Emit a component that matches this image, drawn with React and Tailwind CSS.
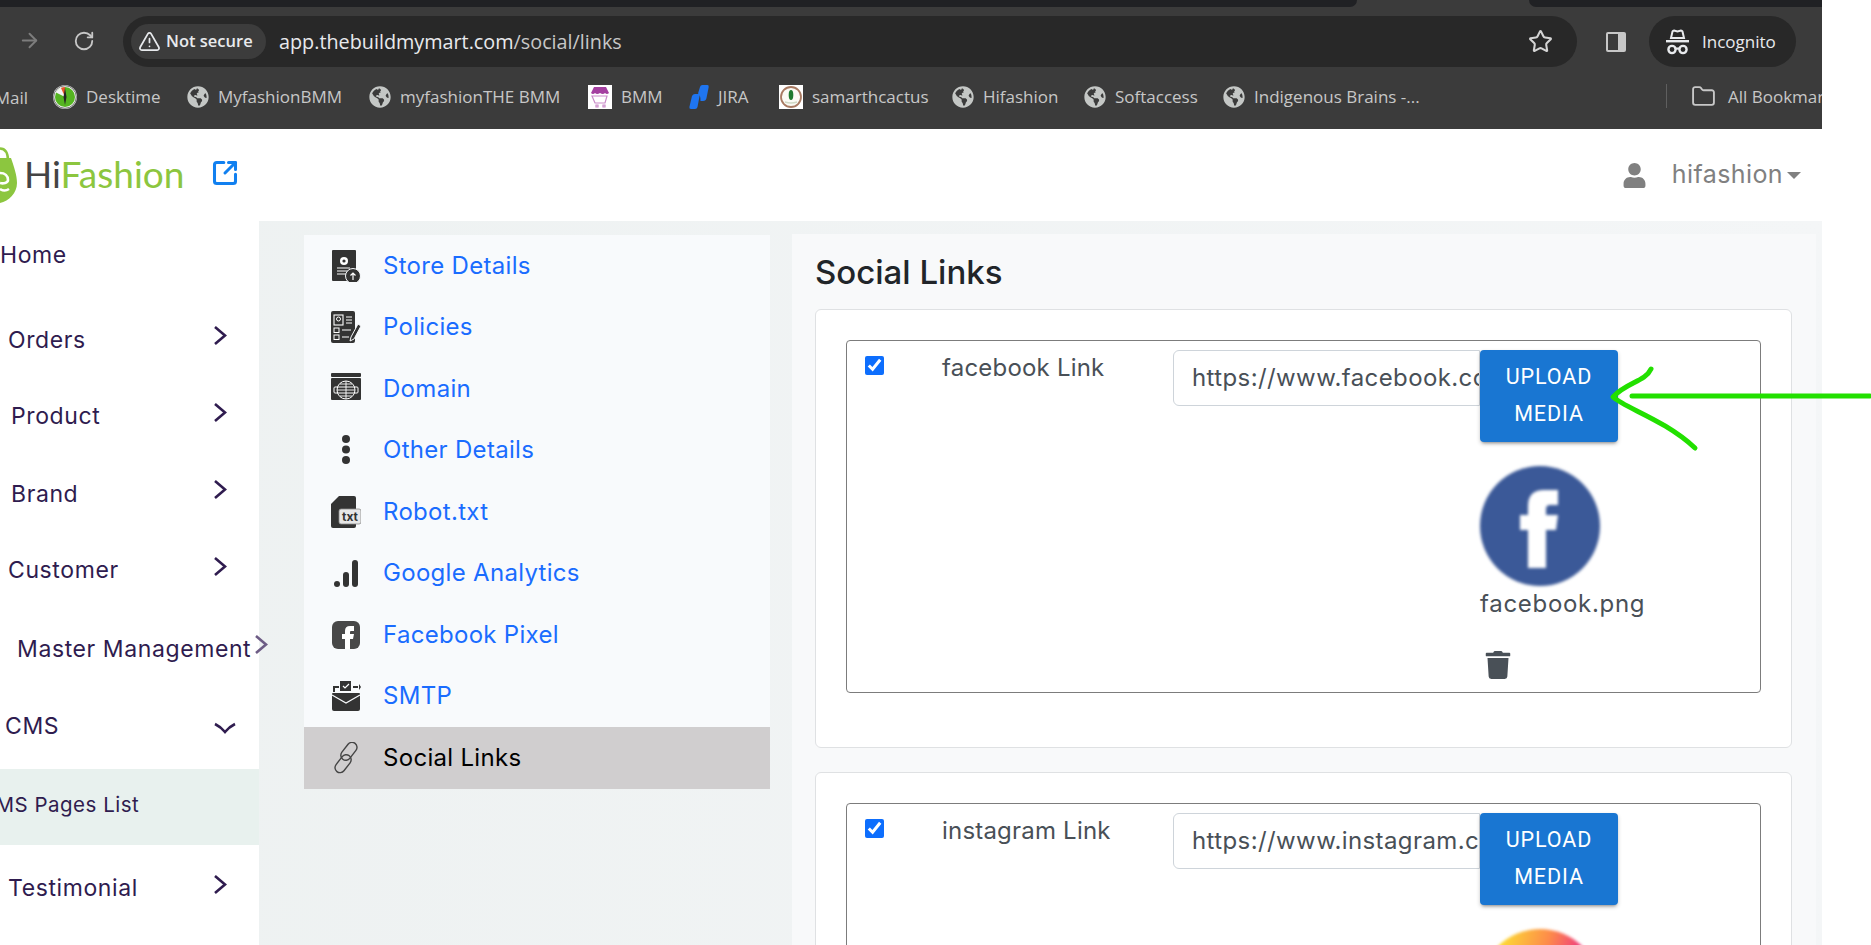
import React from "react";
import { ArrowRight, RotateCw, TriangleAlert, Star, Folder, SquareArrowOutUpRight } from "lucide-react";
import { FaGlobeAmericas, FaUser, FaTrash } from "react-icons/fa";

const Globe = () => <FaGlobeAmericas size={22} className="text-[#c4c7c5] shrink-0" />;

const Desktime = () => (
  <svg width="24" height="24" viewBox="0 0 24 24" className="shrink-0">
    <circle cx="12" cy="12" r="12" fill="#f4f4f4" />
    <circle cx="12" cy="12" r="10" fill="#55b521" />
    <path d="M12 12V2A10 10 0 0 0 3 7.5z" fill="#f4f4f4" />
    <path d="M12 12V2A10 10 0 0 0 8 3z" fill="#e8562a" />
    <path d="M12 3l1.5 9-1.5 8-1.5-8z" fill="#222" />
    <circle cx="12" cy="12" r="11.3" fill="none" stroke="#1d1d1d" strokeWidth="0.6" />
  </svg>
);
const Bmm = () => (
  <svg width="24" height="24" viewBox="0 0 24 24" className="shrink-0">
    <rect width="24" height="24" fill="#fff" />
    <path d="M6 2h12l3 6q-2 2-4 0-2 2-5 0-3 2-5 0-2 2-4 0z" fill="#a43fa0" />
    <path d="M4 11h15l-2 7H7zM8 20h2v2H8zM15 20h2v2h-2z" fill="none" stroke="#c98ac8" strokeWidth="1.2" />
  </svg>
);
const Jira = () => (
  <svg width="20" height="26" viewBox="0 0 20 26" className="shrink-0">
    <path d="M3 12Q4 10 6 10H10Q11 10 10.6 12L8.5 23Q8 25 6 25H2Q0 25 0.4 23ZM11 3Q11.4 1 13.5 1H18.5Q20 1 19.7 3L17.5 14Q17 17 14 17L11.5 17Q11.5 10 9 9.5Z" fill="#1f75f0" />
  </svg>
);
const Samarth = () => (
  <svg width="24" height="24" viewBox="0 0 24 24" className="shrink-0">
    <rect width="24" height="24" fill="#fff" />
    <circle cx="12" cy="12" r="10" fill="#fbfaf4" stroke="#a87a62" strokeWidth="1.8" />
    <ellipse cx="12" cy="10" rx="2.3" ry="5" fill="#1f7a2f" />
    <path d="M6 17q6 2 12 0" fill="none" stroke="#cfd8c4" strokeWidth="1.5" />
  </svg>
);

const Incognito = () => (
  <svg width="23" height="26" viewBox="0 0 23 26" fill="#e8eaed" className="shrink-0">
    <path d="M6.5 2.5Q7 1.5 8 1.5L11.5 2.5 15 1.5Q16 1.5 16.5 2.5L18 9H5Z" fill="none" stroke="#e8eaed" strokeWidth="2" />
    <rect x="0" y="11" width="23" height="2.4" />
    <circle cx="6" cy="20.5" r="3.6" fill="none" stroke="#e8eaed" strokeWidth="2.4" />
    <circle cx="17" cy="20.5" r="3.6" fill="none" stroke="#e8eaed" strokeWidth="2.4" />
    <rect x="9.5" y="18.5" width="4" height="2.2" />
  </svg>
);

const SidePanel = () => (
  <svg width="22" height="22" viewBox="0 0 22 22" className="shrink-0">
    <rect x="1" y="1" width="20" height="20" rx="2" fill="#c7c7c7" />
    <rect x="3" y="3" width="10" height="16" fill="#3b3b3b" />
  </svg>
);

const Logo = () => (
  <svg width="17" height="57" viewBox="0 0 17 57" className="shrink-0">
    <path d="M0 1.5C5 1.5 8 5 8 14" fill="none" stroke="#8cc63f" strokeWidth="2.6" />
    <path d="M0 11H11C14 20 17 28 17 36 17 46 9 54 0 56Z" fill="#8cc63f" />
    <path d="M0 26C5 26 8 29 8 33 8 36 3 37 0 36M0 42C3 44 6 44 9 42" fill="none" stroke="#fff" strokeWidth="2.6" />
  </svg>
);

const Right = ({ c = "#2f1c4f", cls = "" }) => (
  <svg width="14" height="21" viewBox="0 0 14 21" className={"shrink-0 " + cls}>
    <polyline points="2,2 12,10.5 2,19" fill="none" stroke={c} strokeWidth="2.6" />
  </svg>
);
const Down = () => (
  <svg width="22" height="13" viewBox="0 0 22 13" className="shrink-0 mt-[11px]">
    <path d="M1 2Q7 5 11 10Q15 5 21 2" fill="none" stroke="#2f1c4f" strokeWidth="2.6" />
  </svg>
);

const Ic = ({ children }) => (
  <svg width="30" height="32" viewBox="0 0 30 32" fill="#333" className="shrink-0">{children}</svg>
);
const icons = {
  store: (
    <Ic>
      <rect x="1" y="0" width="24" height="31" rx="1" />
      <circle cx="13" cy="11" r="4" fill="#fff" />
      <circle cx="13" cy="11" r="1.6" />
      <path d="M6 18h13M6 21h11M6 24h9" stroke="#fff" strokeWidth="1.2" />
      <circle cx="22" cy="26" r="7.5" stroke="#f8fafc" strokeWidth="1" />
      <path d="M22 30v-7M19.5 25.5 22 23l2.5 2.5" stroke="#fff" strokeWidth="1.2" fill="none" />
    </Ic>
  ),
  policies: (
    <Ic>
      <rect x="0" y="0" width="24" height="32" rx="2" />
      <rect x="3" y="4" width="9" height="10" fill="none" stroke="#fff" strokeWidth="1.1" />
      <circle cx="7.5" cy="8" r="2" fill="none" stroke="#fff" />
      <path d="M15 6h6M15 9h6M15 12h6" stroke="#fff" />
      <rect x="3" y="17" width="5" height="4.5" fill="none" stroke="#fff" />
      <rect x="3" y="24" width="5" height="4.5" fill="none" stroke="#fff" />
      <path d="M11 19h9M11 26h7" stroke="#fff" strokeWidth="1.2" />
      <path d="M20 26l7-13 3 2-7 13-4 2z" stroke="#f8fafc" strokeWidth="1" />
    </Ic>
  ),
  domain: (
    <Ic>
      <rect x="0" y="0" width="30" height="4" rx="1" />
      <rect x="0" y="5" width="30" height="22" rx="1" />
      <circle cx="15" cy="17" r="9" fill="none" stroke="#fff" strokeWidth="1" />
      <path d="M6 17h18M15 8v18M9 11h12M9 23h12" stroke="#fff" strokeWidth="0.9" />
      <rect x="3" y="14" width="24" height="6" rx="1" fill="none" stroke="#fff" strokeWidth="1" />
    </Ic>
  ),
  other: (
    <Ic>
      <circle cx="15" cy="5" r="4" />
      <circle cx="15" cy="15.5" r="4" />
      <circle cx="15" cy="26" r="4" />
    </Ic>
  ),
  robot: (
    <Ic>
      <path d="M8 0h15a2 2 0 0 1 2 2v28a2 2 0 0 1-2 2H2a2 2 0 0 1-2-2V8z" />
      <rect x="8" y="13" width="22" height="15" rx="2" fill="#e7e7e7" stroke="#8a8a8a" strokeWidth="0.8" />
      <text x="19" y="25" textAnchor="middle" fontSize="12" fontWeight="700" fontFamily="Inter, sans-serif" fill="#333">txt</text>
    </Ic>
  ),
  google: (
    <Ic>
      <circle cx="6" cy="27" r="3" />
      <rect x="12" y="15" width="6" height="15" rx="3" />
      <rect x="21" y="3" width="6" height="27" rx="3" />
    </Ic>
  ),
  fb: (
    <Ic>
      <rect x="1" y="2" width="28" height="28" rx="6" fill="#484848" />
      <path d="M14 30V20h-3v-5h3v-3q0-5 5-5h4v5h-3q-1 0-1 1v2h4l-1 5h-3v10z" fill="#fff" />
    </Ic>
  ),
  smtp: (
    <Ic>
      <path d="M3 12V7h5M22 7h5" fill="none" stroke="#333" strokeWidth="2" />
      <rect x="9" y="1" width="11" height="10" />
      <path d="M12 6l2 2 4-4" fill="none" stroke="#fff" strokeWidth="1.2" />
      <path d="M28 4l2 3-2 3z" />
      <path d="M2 13h26a1 1 0 0 1 1 1v15a2 2 0 0 1-2 2H3a2 2 0 0 1-2-2V14a1 1 0 0 1 1-1z" />
      <path d="M1 15l14 8 14-8" fill="none" stroke="#f8fafc" strokeWidth="1.2" />
    </Ic>
  ),
  link: (
    <Ic>
      <g fill="none" stroke="#444" strokeWidth="1.4">
        <rect x="12.5" y="-0.5" width="10" height="20" rx="5" transform="rotate(38 18 10)" />
        <rect x="7.5" y="11.5" width="10" height="20" rx="5" transform="rotate(38 12 21)" />
      </g>
    </Ic>
  ),
};

const Bookmark = ({ icon, width, children }) => (
  <div className="flex items-center gap-[9px] shrink-0">
    {icon}
    <span className={width + " whitespace-nowrap"}>{children}</span>
  </div>
);

const SideRow = ({ cls, text, icon }) => (
  <div className={"flex " + cls}>
    <span className="whitespace-nowrap">{text}</span>
    {icon}
  </div>
);

const NavItem = ({ icon, text, active }) => (
  <div className={"h-[61.5px] pl-[27px] flex items-center gap-[22px] " + (active ? "bg-[#d0cecf] text-black" : "text-[#1a6cff]")}>
    <div className="w-[30px] flex justify-center">{icons[icon]}</div>
    <span className="text-[24px] tracking-[0.3px]">{text}</span>
  </div>
);

const LinkCard = ({ name, url, img }) => (
  <div className="bg-white border border-[#dfe1e3] rounded-md pt-[30px] pl-[30px] pr-[30px] pb-[54px] mb-[24px]">
    <div className="border border-[#7c7c7c] rounded-[4px] h-[353px] pt-[9px] pl-[18px] flex items-start">
      <input type="checkbox" checked readOnly className="w-[19px] h-[19px] mt-[6px] accent-[#0d6efd]" />
      <label className="ml-[58px] w-[231px] text-[24px] tracking-[0.2px] text-[#495057] whitespace-nowrap">{name}</label>
      <input
        readOnly
        value={url}
        className="w-[307px] h-[56px] border border-[#ced4da] rounded-l-md pl-[18px] pb-[2px] text-[24px] tracking-[0.4px] text-[#495057] bg-white outline-none"
      />
      <div className="flex flex-col">
        <button className="w-[138px] h-[92px] pb-[2px] bg-[#1976d2] rounded-[4px] text-white text-[21.5px] font-normal font-['Roboto',sans-serif] leading-[37px] tracking-[0.9px] uppercase shadow-[0_3px_3px_-2px_rgba(0,0,0,0.3),0_2px_4px_rgba(0,0,0,0.2)]">
          Upload<br />Media
        </button>
        {img}
      </div>
    </div>
  </div>
);

const FbImg = (
  <>
    <svg width="120" height="120" viewBox="0 0 120 120" className="mt-[24px] blur-[1.5px]">
      <circle cx="60" cy="60" r="60" fill="#3b5998" />
      <path d="M48 102V64H40V49H48V40Q48 24 64 24H78V39H70Q66 39 66 43V49H78L76 64H66V102Z" fill="#fff" />
    </svg>
    <div className="text-[24px] leading-[36px] tracking-[0.7px] text-[#495057]">facebook.png</div>
    <FaTrash size={28} className="text-[#495057] mt-[29px] ml-[4px]" />
  </>
);
const IgImg = (
  <svg width="120" height="120" viewBox="0 0 120 120" className="mt-[24px] blur-[1.5px]">
    <defs>
      <linearGradient id="ig" x1="0" y1="0" x2="1" y2="0.3">
        <stop offset="0.2" stopColor="#fdd835" />
        <stop offset="0.55" stopColor="#fd8a4a" />
        <stop offset="0.8" stopColor="#f0407c" />
      </linearGradient>
    </defs>
    <circle cx="60" cy="60" r="60" fill="url(#ig)" />
  </svg>
);

export default function App() {
  return (
    <div className="relative w-[1871px] h-[945px] overflow-hidden bg-white font-['Inter',sans-serif]">
      {/* browser chrome */}
      <div className="w-[1822px] h-[129px] bg-[#3b3b3b] flex flex-col text-[#c7c7c7] font-['Open_Sans',sans-serif]">
        <div className="h-[7px] flex">
          <div className="w-[1357px] bg-[#202124] rounded-br-[10px]" />
          <div className="w-[172px]" />
          <div className="flex-1 bg-[#202124] rounded-bl-[10px]" />
        </div>
        <div className="h-[60px] pt-[9px] flex items-start">
          <ArrowRight size={23} strokeWidth={2} className="ml-[18px] mt-[13px] text-[#7d7d7d] shrink-0" />
          <RotateCw size={22} strokeWidth={2} className="ml-[32px] mt-[14px] text-[#c7c7c7] shrink-0" />
          <div className="ml-[28px] w-[1454px] h-[51px] rounded-full bg-[#282828] flex items-center pl-[8px] pr-[22px]">
            <div className="w-[135px] h-[35px] rounded-full bg-[#3c3c3c] flex items-center pl-[7px] gap-[5px] shrink-0">
              <TriangleAlert size={23} strokeWidth={1.8} className="text-[#e8eaed] shrink-0" />
              <span className="text-[16.5px] font-semibold text-[#e8eaed] whitespace-nowrap">Not secure</span>
            </div>
            <span className="ml-[13px] text-[19.8px] text-[#e8eaed] whitespace-nowrap">
              app.thebuildmymart.com<span className="text-[#c7c7c7]">/social/links</span>
            </span>
            <Star size={25} strokeWidth={2} className="ml-auto mr-[2px] text-[#d4d4d4]" />
          </div>
          <div className="ml-[28px] mt-[15px]"><SidePanel /></div>
          <div className="ml-[22px] w-[147px] h-[51px] rounded-full bg-[#282828] flex items-center pl-[17px] gap-[13px] shrink-0">
            <Incognito />
            <span className="text-[17px] text-[#e8eaed]">Incognito</span>
          </div>
        </div>
        <div className="h-[62px] flex items-start pt-[17px] text-[17px] overflow-hidden relative">
          <div className="w-[28px] shrink-0 overflow-hidden flex justify-end mr-[25px]">
            <span className="mt-[1px]">Mail</span>
          </div>
          <div className="flex items-center gap-[26px] h-[26px]">
            <Bookmark icon={<Desktime />} width="w-[75px]">Desktime</Bookmark>
            <Bookmark icon={<Globe />} width="w-[125px]">MyfashionBMM</Bookmark>
            <Bookmark icon={<Globe />} width="w-[162px]">myfashionTHE BMM</Bookmark>
            <Bookmark icon={<Bmm />} width="w-[42px]">BMM</Bookmark>
            <Bookmark icon={<Jira />} width="w-[35px]">JIRA</Bookmark>
            <Bookmark icon={<Samarth />} width="w-[114px]">samarthcactus</Bookmark>
            <Bookmark icon={<Globe />} width="w-[75px]">Hifashion</Bookmark>
            <Bookmark icon={<Globe />} width="w-[82px]">Softaccess</Bookmark>
            <Bookmark icon={<Globe />} width="w-[167px]">Indigenous Brains -...</Bookmark>
          </div>
          <div className="ml-[245px] w-[1px] h-[24px] bg-[#5f5f5f] shrink-0" />
          <Folder size={25} strokeWidth={1.8} className="ml-[24px] text-[#c7c7c7] shrink-0" />
          <span className="ml-[12px] whitespace-nowrap">All Bookmarks</span>
        </div>
      </div>

      {/* app header */}
      <div className="w-[1822px] h-[92px] bg-white flex items-center">
        <Logo />
        <span className="ml-[7px] mb-[4px] text-[37px] font-normal font-['Lato',sans-serif] leading-none text-[#8cc63f]">
          <span className="text-[#444]">Hi</span>Fashion
        </span>
        <SquareArrowOutUpRight size={28} strokeWidth={2.6} className="ml-[27px] mb-[4px] text-[#1180f0]" />
        <FaUser size={25} className="ml-auto text-[#808080]" />
        <span className="ml-[25px] text-[25px] tracking-[0.4px] text-[#808080]">hifashion</span>
        <span className="ml-[4px] mr-[21px] w-0 h-0 border-x-[7px] border-x-transparent border-t-[7px] border-t-[#808080]" />
      </div>

      {/* body */}
      <div className="w-[1822px] h-[724px] flex bg-linear-to-r from-[#edf1f1] to-[#f4f6f7] overflow-hidden">
        <aside className="w-[259px] shrink-0 bg-white text-[23px] leading-[31.5px] tracking-[0.6px] text-[#2f1c4f]">
          <SideRow cls="h-[80px] pt-[19px]" text="Home" />
          <SideRow cls="h-[77px] pt-[24px] pl-[8px] w-[227px] justify-between" text="Orders" icon={<Right />} />
          <SideRow cls="h-[77px] pt-[23px] pl-[11px] w-[227px] justify-between" text="Product" icon={<Right cls="mt-[1px]" />} />
          <SideRow cls="h-[77px] pt-[24px] pl-[11px] w-[227px] justify-between" text="Brand" icon={<Right />} />
          <SideRow cls="h-[77px] pt-[23px] pl-[8px] w-[227px] justify-between" text="Customer" icon={<Right cls="mt-[1px]" />} />
          <SideRow cls="h-[77px] pt-[25px] pl-[17px] gap-[3px]" text="Master Management" icon={<Right c="#6d5c85" />} />
          <SideRow cls="h-[83px] pt-[25px] pl-[5px] w-[236px] justify-between items-start" text="CMS" icon={<Down />} />
          <div className="h-[76px] bg-[#e8f1ee] flex items-center overflow-hidden pb-[5px]">
            <span className="whitespace-nowrap ml-[-20px] text-[20.5px] tracking-[0.5px]">CMS Pages List</span>
          </div>
          <SideRow cls="h-[77px] pt-[28px] pl-[8px] w-[227px] justify-between" text="Testimonial" icon={<Right cls="mt-[1px]" />} />
        </aside>

        <div className="ml-[45px] mt-[14px] w-[466px] h-[553.5px] bg-[#f8fafc] shrink-0">
          <NavItem icon="store" text="Store Details" />
          <NavItem icon="policies" text="Policies" />
          <NavItem icon="domain" text="Domain" />
          <NavItem icon="other" text="Other Details" />
          <NavItem icon="robot" text="Robot.txt" />
          <NavItem icon="google" text="Google Analytics" />
          <NavItem icon="fb" text="Facebook Pixel" />
          <NavItem icon="smtp" text="SMTP" />
          <NavItem icon="link" text="Social Links" active />
        </div>

        <main className="ml-[22px] mt-[13px] w-[1024px] bg-[#f8f9fa] pl-[23px] pr-[24px] shrink-0">
          <h1 className="h-[75px] pt-[18px] text-[33px] font-medium text-[#212529] leading-[40px]">Social Links</h1>
          <LinkCard name="facebook Link" url="https://www.facebook.com" img={FbImg} />
          <LinkCard name="instagram Link" url="https://www.instagram.com" img={IgImg} />
        </main>
      </div>

      {/* hand-drawn annotation */}
      <svg width="280" height="100" viewBox="0 0 280 100" className="absolute left-[1595px] top-[360px] pointer-events-none">
        <path d="M37 36H275" fill="none" stroke="#22e000" strokeWidth="5" strokeLinecap="round" />
        <path d="M56 9C50 22 32 22 18 37C30 48 70 60 100 88" fill="none" stroke="#22e000" strokeWidth="5" strokeLinecap="round" strokeLinejoin="round" />
      </svg>
    </div>
  );
}
